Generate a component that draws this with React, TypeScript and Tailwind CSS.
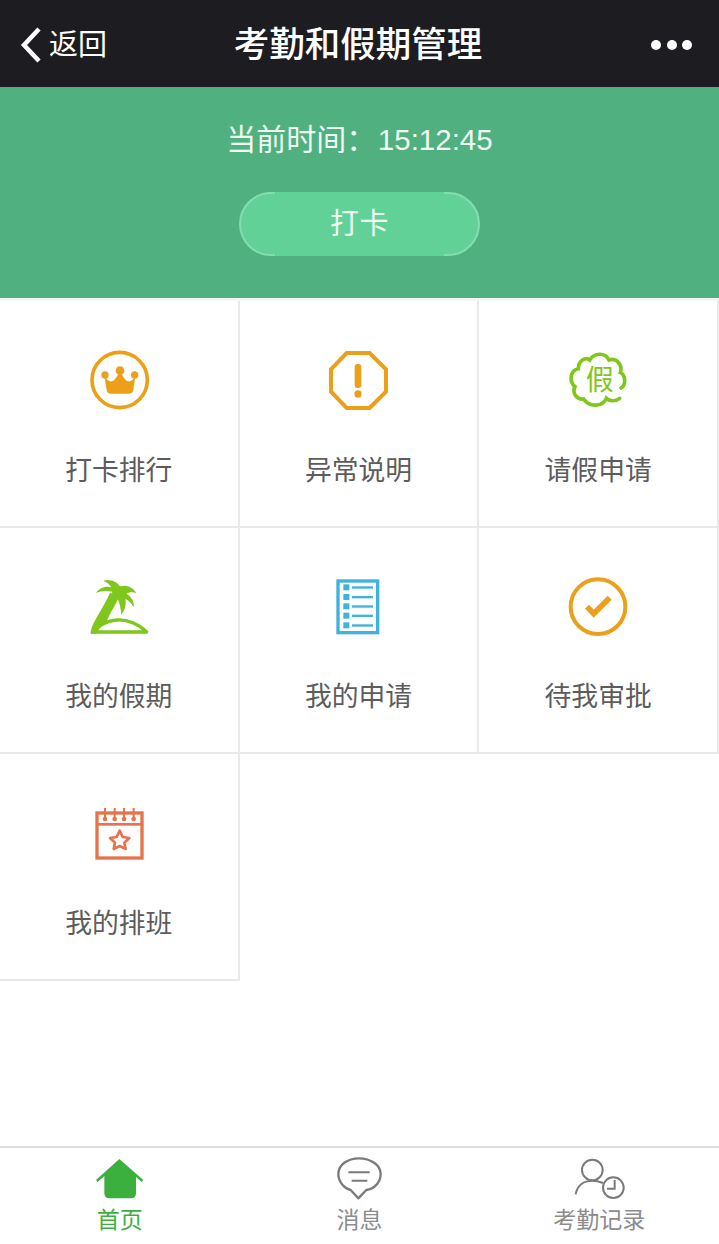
import { type ReactNode } from 'react';

const ORANGE = '#eca019';
const LIME = '#7fc71c';

// icons are traced on a 360 wide canvas, shown at 1/3
function CrownIcon() {
    return (
        <g>
            <circle cx="177" cy="150" r="83" fill="none" stroke={ORANGE} strokeWidth="11" />
            <circle cx="133" cy="135" r="11" fill={ORANGE} />
            <circle cx="178" cy="122" r="13" fill={ORANGE} />
            <circle cx="222" cy="135" r="11" fill={ORANGE} />
            <path
                d="M131 138 C138 150 146 156 154 154 C164 150 170 138 178 122 C186 138 192 150 202 154 C210 156 218 150 224 138 L218 180 Q216 191 205 191 L150 191 Q139 191 138 180 Z"
                fill={ORANGE}
            />
        </g>
    );
}

function WarnIcon() {
    return (
        <g>
            <path
                d="M141 69 L210 69 L259 118 L259 185 L210 234 L141 234 L94 185 L94 118 Z"
                fill="none"
                stroke={ORANGE}
                strokeWidth="12"
            />
            <rect x="165" y="102" width="20" height="72" rx="9" fill={ORANGE} />
            <circle cx="175" cy="192" r="11" fill={ORANGE} />
        </g>
    );
}

function CloudIcon() {
    return (
        <g>
            <path
                d="M240 205 C227 216 208 213 200 205 C190 230 150 234 132 207 C112 210 96 190 106 170 C88 155 90 122 116 116 C116 92 138 80 150 90 C165 66 198 68 208 90 C230 82 250 105 242 128 C258 135 260 165 244 174"
                fill="none"
                stroke={LIME}
                strokeWidth="11"
                strokeLinecap="round"
            />
            <text x="180" y="180" textAnchor="middle" fontSize="84" fill={LIME}>
                假
            </text>
        </g>
    );
}

function PalmIcon() {
    return (
        <g fill={LIME}>
            <path d="M90 222 C90 190 126 150 148 98 L176 108 C166 135 146 160 138 186 L116 206 L106 222 Z" />
            <path
                d="M104 216 L258 216 C235 192 200 178 170 180 C150 181 135 186 118 197"
                fill="none"
                stroke={LIME}
                strokeWidth="10"
                strokeLinejoin="round"
            />
            <circle cx="174" cy="98" r="20" />
            <path d="M165 100 C150 92 128 90 106 99 C114 84 135 76 152 82 C148 74 140 68 128 62 C150 56 170 66 178 80 C192 74 214 78 227 99 C214 95 204 97 198 101 C212 110 222 125 219 142 C211 127 202 120 194 117 C198 132 192 152 182 164 C180 140 176 122 165 108 Z" />
        </g>
    );
}

function ListIcon() {
    const rows = [82, 111, 139, 167, 196];
    return (
        <g>
            <rect x="115" y="63" width="119" height="155" fill="none" stroke="#3fb2de" strokeWidth="10" />
            {rows.map((y) => (
                <g key={y}>
                    <rect x="131" y={y - 9} width="18" height="18" fill="#3fb2de" />
                    <rect x="157" y={y - 3} width="63" height="7" fill="#3fb2de" />
                </g>
            ))}
        </g>
    );
}

function CheckIcon() {
    return (
        <g>
            <circle cx="175" cy="140" r="82" fill="none" stroke={ORANGE} strokeWidth="12" />
            <path d="M142 140 L162 161 L210 113" fill="none" stroke={ORANGE} strokeWidth="17" />
        </g>
    );
}

function CalendarIcon() {
    const pegs = [133, 162, 190, 219];
    const c = '#e8734a';
    return (
        <g>
            <rect x="109" y="69" width="135" height="135" fill="none" stroke={c} strokeWidth="10" />
            <rect x="107" y="99" width="139" height="8" fill={c} />
            {pegs.map((x) => (
                <g key={x}>
                    <rect x={x - 3} y="54" width="6" height="32" fill={c} />
                    <circle cx={x} cy="87" r="7" fill={c} />
                </g>
            ))}
            <path
                d="M177 122 L186 141 L206 144 L191 158 L195 177 L177 168 L159 177 L163 158 L148 144 L168 141 Z"
                fill="none"
                stroke={c}
                strokeWidth="8"
                strokeLinejoin="round"
            />
        </g>
    );
}

const items: { label: string; top: number; icon: ReactNode }[] = [
    { label: '打卡排行', top: 9, icon: <CrownIcon /> },
    { label: '异常说明', top: 9, icon: <WarnIcon /> },
    { label: '请假申请', top: 9, icon: <CloudIcon /> },
    { label: '我的假期', top: 0, icon: <PalmIcon /> },
    { label: '我的申请', top: 0, icon: <ListIcon /> },
    { label: '待我审批', top: 0, icon: <CheckIcon /> },
    { label: '我的排班', top: -12, icon: <CalendarIcon /> },
];

function Tab({ label, active, children }: { label: string; active?: boolean; children: ReactNode }) {
    return (
        <div className="flex flex-col items-center">
            <svg className="w-[120px] h-[57px]" viewBox="0 24 360 171">
                {children}
            </svg>
            <span className={`text-[23px] leading-[30px] ${active ? 'text-[#3cb03f]' : 'text-[#8c8c8c]'}`}>
                {label}
            </span>
        </div>
    );
}

export default function App() {
    return (
        <div className="w-full h-[1244px] flex flex-col bg-white overflow-hidden font-['Liberation_Sans','Noto_Sans_CJK_SC',sans-serif]">
            {/* 顶部导航 */}
            <div className="h-[87px] shrink-0 bg-[#1c1c21] flex items-center pt-[3px] text-white">
                <div className="w-[150px] flex items-center pl-[20px]">
                    <svg className="w-[24px] h-[40px]" viewBox="0 0 24 40">
                        <path d="M19 4 L4 20 L19 36" fill="none" stroke="white" strokeWidth="4.5" />
                    </svg>
                    <span className="ml-[5px] text-[29px] leading-[40px]">返回</span>
                </div>
                <div className="flex-1 text-center pr-[3px] text-[35.5px] leading-[44px] font-medium">考勤和假期管理</div>
                <div className="w-[150px] flex justify-end items-center gap-[5.5px] pr-[27px]">
                    <span className="w-[10px] h-[10px] rounded-full bg-white" />
                    <span className="w-[10px] h-[10px] rounded-full bg-white" />
                    <span className="w-[10px] h-[10px] rounded-full bg-white" />
                </div>
            </div>

            {/* 打卡 */}
            <div className="h-[211px] shrink-0 bg-[#50b07f] flex flex-col items-center pt-[32px] text-white">
                <div className="h-[41px] flex items-center text-[#eef9f3]">
                    <span className="text-[30px] leading-[41px]">当前时间：</span>
                    <span className="ml-[1.5px] text-[29.5px] leading-[41px]">15:12:45</span>
                </div>
                <div className="relative mt-[32px] w-[241px] h-[64px] rounded-full bg-[#62d198] border-2 border-[#84dcb0] flex items-center justify-center">
                    <span className="absolute inset-y-[-2px] left-[34px] right-[34px] bg-[#62d198]" />
                    <span className="relative text-[29px] leading-[40px] tracking-[0.5px] text-[#eef9f3]">打卡</span>
                </div>
            </div>

            {/* 功能入口 */}
            <div className="flex-1 border-t-[3px] border-[#f4f8f5] grid grid-cols-3 auto-rows-[226.5px] content-start">
                {items.map((item) => (
                    <div
                        key={item.label}
                        className="border-r-2 border-b-2 border-[#e9e9e9] flex flex-col items-center pt-[32px]"
                    >
                        <svg className="w-[120px] h-[100px]" viewBox={`-5 ${item.top} 360 300`}>
                            {item.icon}
                        </svg>
                        <span className="mt-[17.5px] text-[26.8px] leading-[40px] text-[#5c5c5c]">{item.label}</span>
                    </div>
                ))}
            </div>

            {/* 底部导航 */}
            <div className="h-[98px] shrink-0 border-t-2 border-[#dddddd] grid grid-cols-3">
                <Tab label="首页" active>
                    <path
                        d="M178 57 L250 120 L245 126 L228 111 L228 160 Q228 175 213 175 L148 175 Q133 175 133 160 L133 108 L113 126 L108 120 Z"
                        fill="#3cb03f"
                    />
                </Tab>
                <Tab label="消息">
                    <path
                        d="M180 55 C145 55 118 75 118 102 C118 128 140 148 155 150 L178 175 L202 150 C225 147 245 128 245 102 C245 75 215 55 180 55 Z"
                        fill="none"
                        stroke="#7a7a7a"
                        strokeWidth="7"
                        strokeLinejoin="round"
                    />
                    <path d="M148 97 H212 M158 122 H205" stroke="#7a7a7a" strokeWidth="6" />
                </Tab>
                <Tab label="考勤记录">
                    <g fill="none" stroke="#7a7a7a" strokeWidth="6" transform="translate(5 0)">
                        <circle cx="155" cy="90" r="31" />
                        <path d="M105 163 C110 135 130 122 155 122 C165 122 175 124 187 129" />
                        <circle cx="218" cy="143" r="31" />
                        <path d="M222 120 V146 H199" />
                    </g>
                </Tab>
            </div>
        </div>
    );
}
